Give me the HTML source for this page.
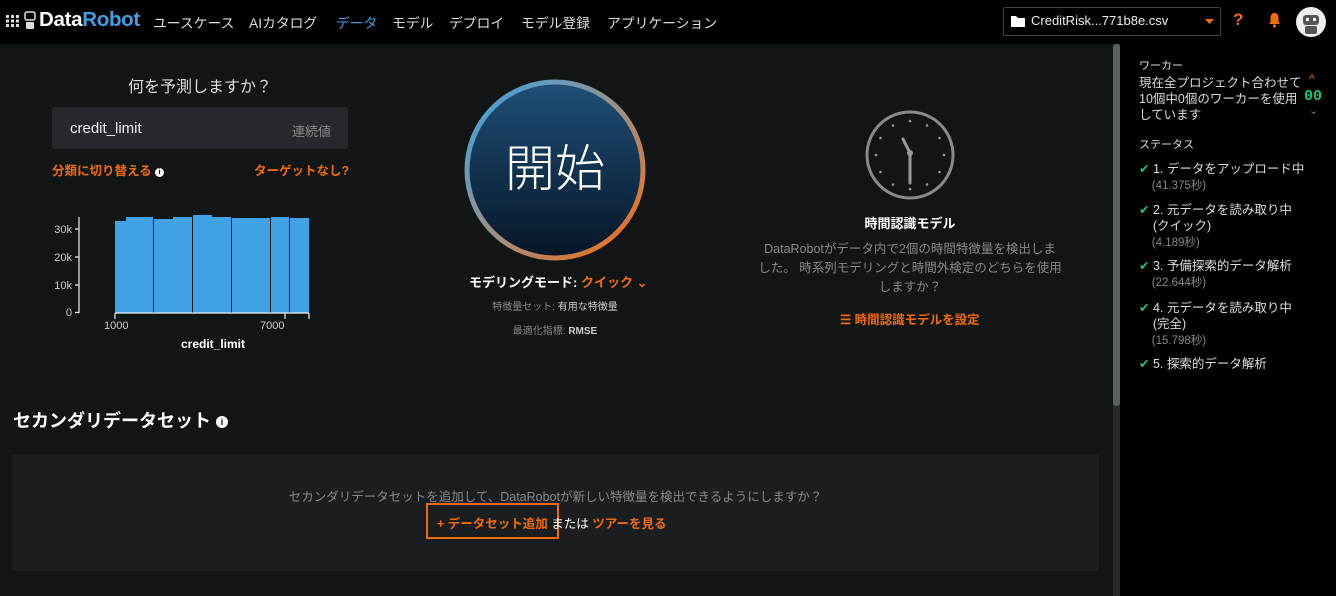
<!DOCTYPE html>
<html><head><meta charset="utf-8"><style>
*{margin:0;padding:0;box-sizing:border-box}
body{width:1336px;height:596px;overflow:hidden;background:#111516;font-family:"Liberation Sans","Noto Sans CJK JP",sans-serif;color:#fff;position:relative}
.abs{position:absolute}
.top{left:0;top:0;width:1336px;height:44px;background:#000}
.nav span{position:absolute;top:12px;font-size:13.8px;color:#ddd}
.org{color:#f06c0a}
.side{left:1120px;top:44px;width:216px;height:552px;background:#000}
.side .t{font-size:12.5px;line-height:16px;color:#ddd}
.g{color:#888}
.sm{font-size:11.5px}
</style></head><body>
<div class="abs top">
  <svg class="abs" style="left:6px;top:15px" width="13" height="12"><g fill="#ddd"><rect x="0" y="0" width="3" height="3"/><rect x="5" y="0" width="3" height="3"/><rect x="10" y="0" width="3" height="3"/><rect x="0" y="4.5" width="3" height="3"/><rect x="5" y="4.5" width="3" height="3"/><rect x="10" y="4.5" width="3" height="3"/><rect x="0" y="9" width="3" height="3"/><rect x="5" y="9" width="3" height="3"/><rect x="10" y="9" width="3" height="3"/></g></svg>
  <svg class="abs" style="left:23px;top:11px" width="14" height="20"><rect x="2" y="1" width="10" height="8" rx="2" fill="none" stroke="#ddd" stroke-width="1.5"/><rect x="3" y="11" width="8" height="7" rx="1" fill="#ddd"/></svg>
  <div class="abs" style="left:39px;top:8px;font-size:20.5px;font-weight:bold;letter-spacing:-0.3px"><span style="color:#fff">Data</span><span style="color:#3f9fe4">Robot</span></div>
  <div class="nav">
    <span style="left:153px">ユースケース</span>
    <span style="left:249px">AIカタログ</span>
    <span style="left:336px;color:#3f9fe4">データ</span>
    <span style="left:392px">モデル</span>
    <span style="left:449px">デプロイ</span>
    <span style="left:521px">モデル登録</span>
    <span style="left:607px">アプリケーション</span>
  </div>
  <div class="abs" style="left:1003px;top:7px;width:218px;height:29px;border:1px solid #444;border-radius:2px"></div>
  <svg class="abs" style="left:1011px;top:15px" width="14" height="12"><path d="M0 1h5l2 2h7v9H0z" fill="#fff"/></svg>
  <div class="abs" style="left:1031px;top:13px;font-size:13px;color:#eee">CreditRisk...771b8e.csv</div>
  <svg class="abs" style="left:1205px;top:19px" width="9" height="6"><path d="M0 0h9L4.5 5z" fill="#f06c0a"/></svg>
  <div class="abs org" style="left:1233px;top:10px;font-size:17px;font-weight:bold">?</div>
  <svg class="abs" style="left:1268px;top:12px" width="13" height="16"><path d="M6.5 1C3.5 1 2.5 3.5 2.5 6v4L1 12h11l-1.5-2V6C10.5 3.5 9.5 1 6.5 1z" fill="#f06c0a"/><circle cx="6.5" cy="14" r="1.6" fill="#f06c0a"/></svg>
  <svg class="abs" style="left:1296px;top:7px" width="30" height="30"><circle cx="15" cy="15" r="15" fill="#eee"/><rect x="7" y="8" width="16" height="10" rx="3" fill="#555"/><rect x="10" y="11" width="3" height="3" fill="#fff"/><rect x="17" y="11" width="3" height="3" fill="#fff"/><rect x="9" y="19" width="12" height="8" rx="2" fill="#555"/></svg>
</div>

<div class="abs" style="left:52px;top:73px;width:296px;text-align:center;font-size:16px;color:#ddd">何を予測しますか？</div>
<div class="abs" style="left:52px;top:107px;width:296px;height:42px;background:#25292d;border-radius:2px"></div>
<div class="abs" style="left:70px;top:120px;font-size:15px;color:#eee">credit_limit</div>
<div class="abs" style="left:292px;top:121px;font-size:13px;color:#888">連続値</div>
<div class="abs org" style="left:52px;top:160px;font-size:12.5px;font-weight:bold">分類に切り替える <span style="display:inline-block;width:9px;height:9px;border-radius:50%;background:#fff;color:#000;font-size:7px;line-height:9px;text-align:center;vertical-align:1px">i</span></div>
<div class="abs org" style="left:254px;top:160px;font-size:12.5px;font-weight:bold">ターゲットなし?</div>
<svg class="abs" style="left:40px;top:200px" width="300" height="160">
  <g fill="#41a2e6">
    <rect x="75" y="21" width="11" height="92"/><rect x="86" y="17" width="27" height="96"/><rect x="113" y="19" width="20" height="94"/><rect x="133" y="17" width="20" height="96"/><rect x="153" y="15" width="19" height="98"/><rect x="172" y="17" width="19" height="96"/><rect x="191" y="18" width="40" height="95"/><rect x="231" y="17" width="19" height="96"/><rect x="250" y="18" width="19" height="95"/>
  </g>
  <g stroke="#111516" stroke-width="1"><line x1="113.5" y1="15" x2="113.5" y2="113"/><line x1="152.5" y1="15" x2="152.5" y2="113"/><line x1="191.5" y1="15" x2="191.5" y2="113"/><line x1="230.5" y1="15" x2="230.5" y2="113"/><line x1="249.5" y1="15" x2="249.5" y2="113"/></g>
  <g stroke="#eee" stroke-width="1.2" fill="none"><path d="M39 17v95.5h-4M39 29h-4M39 57h-4M39 85h-4"/><path d="M75 113h194M75 113v6M245 113v6M269 113v6"/></g>
  <g fill="#ccc" font-size="11" text-anchor="end"><text x="32" y="33">30k</text><text x="32" y="61">20k</text><text x="32" y="89">10k</text><text x="32" y="116">0</text></g>
  <g fill="#ccc" font-size="11"><text x="64" y="129">1000</text><text x="220" y="129">7000</text></g>
  <text x="173" y="148" fill="#fff" font-size="12" font-weight="bold" text-anchor="middle">credit_limit</text>
</svg>

<svg class="abs" style="left:464px;top:79px" width="182" height="182">
  <defs><linearGradient id="rg" x1="0" y1="0" x2="1" y2="1"><stop offset="0" stop-color="#3aa2e8"/><stop offset="0.5" stop-color="#9a9088"/><stop offset="1" stop-color="#fb6a0a"/></linearGradient>
  <linearGradient id="fg" x1="0" y1="0" x2="0" y2="1"><stop offset="0" stop-color="#1f4f78"/><stop offset="1" stop-color="#061526"/></linearGradient></defs>
  <circle cx="91" cy="91" r="88" fill="url(#fg)" stroke="url(#rg)" stroke-width="5"/>
  <text x="91" y="107" fill="#fff" font-size="50" text-anchor="middle" font-family="Noto Sans CJK JP,sans-serif" font-weight="300">開始</text>
</svg>
<div class="abs" style="left:469px;top:272px;font-size:13px;font-weight:bold">モデリングモード: <span class="org">クイック ⌄</span></div>
<div class="abs" style="left:440px;top:298px;width:230px;text-align:center;font-size:10px;color:#888">特徴量セット: <span style="color:#ccc">有用な特徴量</span></div>
<div class="abs" style="left:440px;top:322px;width:230px;text-align:center;font-size:10px;color:#888">最適化指標: <span style="color:#ccc;font-weight:bold">RMSE</span></div>

<svg class="abs" style="left:864px;top:109px" width="92" height="92">
  <circle cx="46" cy="46" r="43" fill="none" stroke="#888b8e" stroke-width="3"/>
  <g fill="#999"><circle cx="46" cy="12" r="1.3"/><circle cx="63" cy="16.5" r="1.3"/><circle cx="75.5" cy="29" r="1.3"/><circle cx="80" cy="46" r="1.3"/><circle cx="75.5" cy="63" r="1.3"/><circle cx="63" cy="75.5" r="1.3"/><circle cx="46" cy="80" r="1.3"/><circle cx="29" cy="75.5" r="1.3"/><circle cx="16.5" cy="63" r="1.3"/><circle cx="12" cy="46" r="1.3"/><circle cx="16.5" cy="29" r="1.3"/><circle cx="29" cy="16.5" r="1.3"/></g>
  <path d="M46 44V74M46 44L39 30" stroke="#999" stroke-width="3" stroke-linecap="round"/><circle cx="46" cy="44" r="3" fill="#999"/>
</svg>
<div class="abs" style="left:760px;top:213px;width:300px;text-align:center;font-size:13px;font-weight:bold">時間認識モデル</div>
<div class="abs" style="left:758px;top:240px;width:304px;text-align:center;font-size:12.5px;line-height:19px;color:#888">DataRobotがデータ内で2個の時間特徴量を検出しました。 時系列モデリングと時間外検定のどちらを使用しますか？</div>
<div class="abs org" style="left:840px;top:309px;font-size:12.5px;font-weight:bold">☰ 時間認識モデルを設定</div>

<div class="abs" style="left:13px;top:407px;font-size:18px;font-weight:bold">セカンダリデータセット <span style="display:inline-block;width:12px;height:12px;border-radius:50%;background:#fff;color:#000;font-size:9px;line-height:12px;text-align:center;vertical-align:2px">i</span></div>
<div class="abs" style="left:12px;top:455px;width:1087px;height:116px;background:#1b1e21"></div>
<div class="abs" style="left:12px;top:486px;width:1087px;text-align:center;font-size:12.5px;color:#888">セカンダリデータセットを追加して、DataRobotが新しい特徴量を検出できるようにしますか？</div>
<div class="abs" style="left:426px;top:503px;width:133px;height:36px;border:2px solid #f06c0a"></div>
<div class="abs" style="left:437px;top:513px;font-size:12.5px;font-weight:bold"><span class="org">+ データセット追加</span> <span style="color:#fff;font-weight:normal">または</span> <span class="org">ツアーを見る</span></div>

<div class="abs" style="left:1113px;top:44px;width:7px;height:552px;background:#25292b"></div>
<div class="abs" style="left:1113px;top:44px;width:7px;height:362px;background:#5a5f60;border-radius:3px"></div>

<div class="abs side">
  <div class="abs t g" style="left:19px;top:14px;font-size:11px">ワーカー</div>
  <div class="abs t" style="left:19px;top:31px;width:165px">現在全プロジェクト合わせて10個中0個のワーカーを使用しています</div>
  <div class="abs org" style="left:189px;top:28px;font-size:12px">^</div>
  <div class="abs" style="left:184px;top:44px;font-size:15px;font-weight:bold;color:#17c96e;font-family:'Liberation Mono',monospace">00</div>
  <div class="abs g" style="left:189px;top:60px;font-size:11px">⌄</div>
  <div class="abs t g" style="left:19px;top:93px;font-size:11px">ステータス</div>
  <div class="abs t" style="left:19px;top:117px"><span style="color:#17c96e">✔</span> 1. データをアップロード中<br><span class="g sm">&nbsp;&nbsp;&nbsp;&nbsp;(41.375秒)</span></div>
  <div class="abs t" style="left:19px;top:158px"><span style="color:#17c96e">✔</span> 2. 元データを読み取り中<br>&nbsp;&nbsp;&nbsp;&nbsp;(クイック)<br><span class="g sm">&nbsp;&nbsp;&nbsp;&nbsp;(4.189秒)</span></div>
  <div class="abs t" style="left:19px;top:214px"><span style="color:#17c96e">✔</span> 3. 予備探索的データ解析<br><span class="g sm">&nbsp;&nbsp;&nbsp;&nbsp;(22.644秒)</span></div>
  <div class="abs t" style="left:19px;top:256px"><span style="color:#17c96e">✔</span> 4. 元データを読み取り中<br>&nbsp;&nbsp;&nbsp;&nbsp;(完全)<br><span class="g sm">&nbsp;&nbsp;&nbsp;&nbsp;(15.798秒)</span></div>
  <div class="abs t" style="left:19px;top:312px"><span style="color:#17c96e">✔</span> 5. 探索的データ解析</div>
</div>
</body></html>
